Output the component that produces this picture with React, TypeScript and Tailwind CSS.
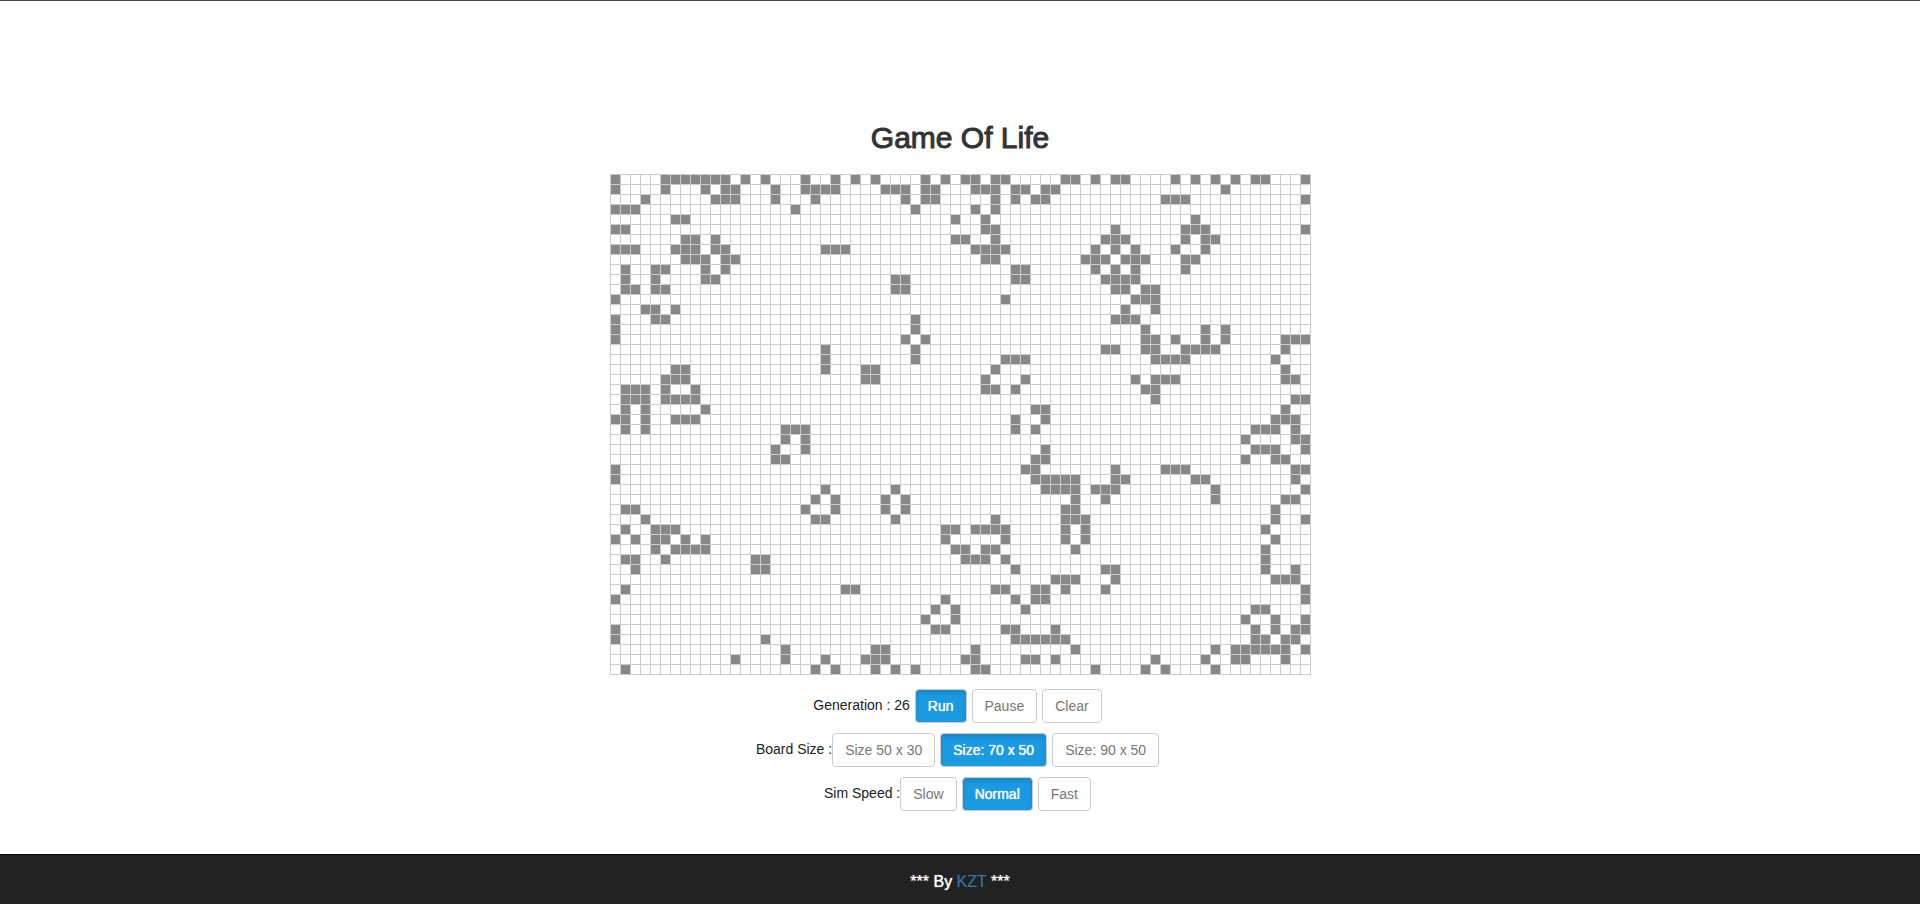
import { useState } from "react";
import clsx from "clsx";

const COLS = 70;

// One entry per board row: live columns, written as single indexes or ranges.
const GENERATION_ROWS = [
  "0 5-11 13 15 19 22 24 26 31 33 35-36 38-39 45-46 48 50-51 56 58 60 62 64-65 69",
  "0 5 9 11-12 16 19-22 27-29 31-32 36-38 40-41 43-44 61",
  "3 10-12 16 20 29 31-32 38 40 42-43 55-57 69",
  "0-2 18 30 36 38",
  "6-7 34 37 58",
  "0-1 37-38 50 57-59 69",
  "7-8 10 34-35 38 49-51 57 59-60",
  "0-2 6-8 10-11 21-23 36-39 48 50 52 56 59",
  "7-9 11-12 37-38 47-49 51-53 57-58",
  "1 4-5 9 11 40-41 48 50 52 57",
  "1 4 9-10 28-29 40-41 49-52",
  "1-2 4-5 28-29 50-51 53-54",
  "0 39 52-54",
  "3-4 6 51 54",
  "0 4-5 30 50-52",
  "0 30 53 59 61",
  "0 29 31 53-54 56 59 61 67-69",
  "21 30 49-50 53-54 57-60 67",
  "21 30 39-41 54-57 66",
  "6-7 21 25-26 38 67",
  "5-7 25-26 37 41 52 54-56 67-68",
  "1-3 5 8 37-38 40 53-54",
  "1-3 5-8 54 68-69",
  "1 3 9 42-43 67",
  "0-1 3 6-8 40 43 66-68",
  "1 3 17-19 40 42 64-66 68",
  "17 19 63 68-69",
  "16 19 43 64-66 69",
  "16-17 42-43 63 66-67",
  "0 41-42 50 55-57 68-69",
  "0 42-46 50-51 58-59 68",
  "21 28 43-46 48-50 60 69",
  "20 22 27 29 46 49 60 67-68",
  "1-2 19 22 27 29 45-46 66",
  "3 20-21 28 38 45-47 66 69",
  "1 4-6 33-34 36-39 45 47 65",
  "0 2 4-5 7 9 33 39 45 47 66",
  "4 6-9 34-35 37-38 46 65",
  "1-2 5 14-15 35-37 39 65",
  "2 14-15 40 49-50 65 68",
  "44-46 50 66-68",
  "1 23-24 38-39 42-43 45 49 69",
  "0 33 40 42-43 69",
  "32 34 41 64-65",
  "31 34 63 66 69",
  "0 32-33 39-40 44 64 66 68-69",
  "0 15 40-45 64-65 67-68",
  "17 26-27 36 46 60 62-67 69",
  "12 17 21 25-27 35-36 41-42 44 54 59 62-63 67",
  "1 20 22 26 28 30 36-37 48 53 55 60",
];

function parseRow(row: string): boolean[] {
  const cells = new Array<boolean>(COLS).fill(false);
  for (const part of row.split(" ")) {
    const [from, to = from] = part.split("-").map(Number);
    cells.fill(true, from, to + 1);
  }
  return cells;
}

function Board({ initial }: { initial: boolean[] }) {
  const [cells, setCells] = useState(initial);
  const toggle = (index: number) =>
    setCells((prev) => prev.map((alive, i) => (i === index ? !alive : alive)));

  return (
    <div className="grid grid-cols-[repeat(70,10px)] auto-rows-[10px] border-r border-b border-[#ccc]">
      {cells.map((alive, i) => (
        <div
          key={i}
          onClick={() => toggle(i)}
          className={clsx("border-t border-l border-[#ccc]", alive ? "bg-[#888]" : "bg-white")}
        />
      ))}
    </div>
  );
}

type ControlRowProps = {
  label: string;
  options: string[];
  initial: string;
  spaced?: boolean;
};

function ControlRow({ label, options, initial, spaced }: ControlRowProps) {
  const [active, setActive] = useState(initial);
  return (
    <div role="group" aria-label={label} className="flex items-center justify-center">
      <span className={clsx("pb-0.5", spaced && "mr-[5px]")}>{label}</span>
      {options.map((option) => (
        <button
          key={option}
          type="button"
          aria-pressed={option === active}
          onClick={() => setActive(option)}
          className={clsx(
            "mr-[5px] cursor-pointer rounded border border-[#ccc] px-3 py-1.5 leading-5",
            option === active
              ? "bg-[#1b9ae4] text-white shadow-[inset_0_3px_5px_rgba(0,0,0,0.125)] [text-shadow:0_0_1px_#fff]"
              : "bg-white text-[#777]",
          )}
        >
          {option}
        </button>
      ))}
    </div>
  );
}

export default function App() {
  return (
    <div className="flex min-h-screen flex-col border-t border-[#444] bg-white font-['Liberation_Sans',Arial,sans-serif] text-sm text-[#222]">
      <main className="flex flex-col items-center pt-[120px] pb-8">
        <h1 className="mb-5 text-[30px] leading-[33px] font-normal text-[#333] [-webkit-text-stroke:1px_#333]">
          Game Of Life
        </h1>
        <Board initial={GENERATION_ROWS.flatMap(parseRow)} />
        <div className="mt-3.5 flex flex-col gap-2.5">
          <ControlRow label="Generation : 26" options={["Run", "Pause", "Clear"]} initial="Run" spaced />
          <ControlRow
            label="Board Size :"
            options={["Size 50 x 30", "Size: 70 x 50", "Size: 90 x 50"]}
            initial="Size: 70 x 50"
          />
          <ControlRow label="Sim Speed :" options={["Slow", "Normal", "Fast"]} initial="Normal" />
        </div>
      </main>
      <footer className="mt-auto border-t border-[#080808] bg-[#222] pt-[15px] pb-2.5 text-center text-base text-white">
        <span className="[text-shadow:0_0_1px_#fff]">*** By</span>{" "}
        <a href="#kzt" className="text-[#337ab7]">
          KZT
        </a>{" "}
        <span className="[text-shadow:0_0_1px_#fff]">***</span>
      </footer>
    </div>
  );
}
